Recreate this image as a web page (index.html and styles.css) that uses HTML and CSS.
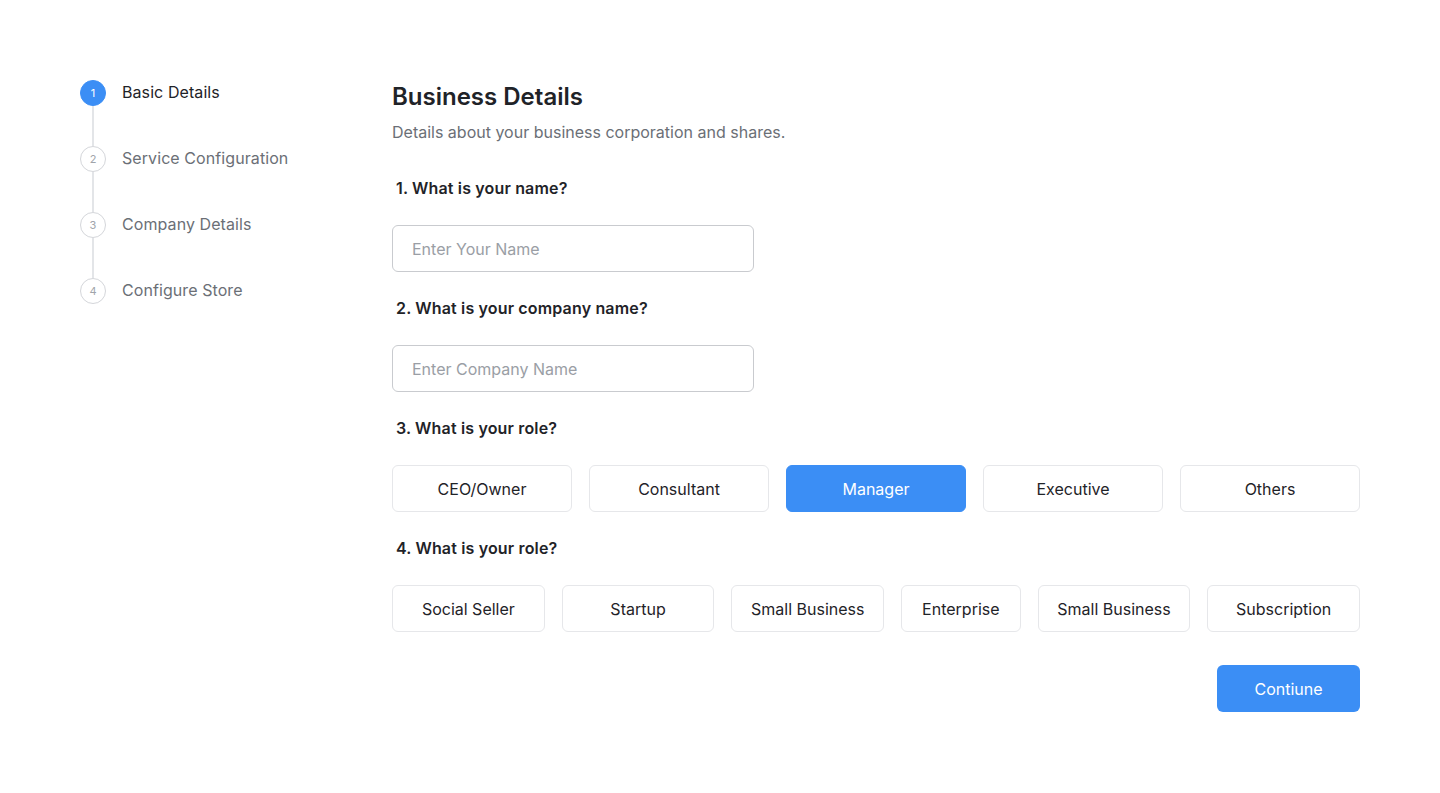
FILE: index.html
```html
<!DOCTYPE html>
<html lang="en">
<head>
<meta charset="utf-8">
<title>Business Details</title>
<link rel="stylesheet" href="styles.css">
</head>
<body>
<div class="page">
  <aside class="stepper">
    <div class="step active">
      <div class="step-marker"><span class="dot">1</span><span class="line"></span></div>
      <span class="step-label">Basic Details</span>
    </div>
    <div class="step">
      <div class="step-marker"><span class="dot">2</span><span class="line"></span></div>
      <span class="step-label">Service Configuration</span>
    </div>
    <div class="step">
      <div class="step-marker"><span class="dot">3</span><span class="line"></span></div>
      <span class="step-label">Company Details</span>
    </div>
    <div class="step last">
      <div class="step-marker"><span class="dot">4</span></div>
      <span class="step-label">Configure Store</span>
    </div>
  </aside>
  <main class="form">
    <h1 class="title">Business Details</h1>
    <p class="subtitle">Details about your business corporation and shares.</p>

    <label class="question">1. What is your name?</label>
    <div class="input">Enter Your Name</div>

    <label class="question">2. What is your company name?</label>
    <div class="input">Enter Company Name</div>

    <label class="question">3. What is your role?</label>
    <div class="options five">
      <div class="option">CEO/Owner</div>
      <div class="option">Consultant</div>
      <div class="option selected">Manager</div>
      <div class="option">Executive</div>
      <div class="option">Others</div>
    </div>

    <label class="question">4. What is your role?</label>
    <div class="options six">
      <div class="option">Social Seller</div>
      <div class="option">Startup</div>
      <div class="option">Small Business</div>
      <div class="option narrow">Enterprise</div>
      <div class="option">Small Business</div>
      <div class="option">Subscription</div>
    </div>

    <div class="actions">
      <button class="continue">Contiune</button>
    </div>
  </main>
</div>
</body>
</html>
```
FILE: styles.css
```css
* { box-sizing: border-box; }
html, body { margin: 0; padding: 0; background: #ffffff; }
body {
  font-family: Inter, "Noto Sans", "Liberation Sans", sans-serif;
  color: #1f2328;
  -webkit-font-smoothing: antialiased;
}
.page {
  display: flex;
  padding: 80px 80px 0 80px;
}
.stepper {
  width: 312px;
  flex: none;
  display: flex;
  flex-direction: column;
}
.step {
  display: flex;
  align-items: flex-start;
  height: 66px;
}
.step-marker {
  width: 26px;
  display: flex;
  flex-direction: column;
  align-items: center;
  height: 66px;
}
.dot {
  width: 26px;
  height: 26px;
  border-radius: 50%;
  border: 1px solid #d4d6da;
  color: #a0a4aa;
  font-size: 11px;
  display: flex;
  align-items: center;
  justify-content: center;
  flex: none;
  background: #fff;
}
.step.active .dot {
  background: #3b8ef5;
  border-color: #3b8ef5;
  color: #ffffff;
}
.line {
  width: 2px;
  flex: 1;
  background: #e3e5e8;
}
.step-label {
  margin-left: 16px;
  font-size: 16px;
  line-height: 26px;
  color: #6b6f76;
  margin-top: -1px;
  letter-spacing: 0.005em;
}
.step.active .step-label { color: #1f2328; }

.form {
  flex: 1;
  display: flex;
  flex-direction: column;
  max-width: 968px;
}
.title {
  margin: 1px 0 0 0;
  font-size: 24px;
  line-height: 32px;
  font-weight: 600;
  color: #1f2328;
}
.subtitle {
  margin: 7px 0 0 0;
  font-size: 16px;
  line-height: 24px;
  color: #6b6f76;
}
.question {
  display: block;
  margin: 32px 0 25px 4px;
  font-size: 16px;
  line-height: 24px;
  font-weight: 600;
  color: #1f2328;
  letter-spacing: 0.01em;
}
.input + .question, .options + .question { margin-top: 24px; }
.input {
  width: 362px;
  height: 47px;
  border: 1px solid #c9cbcf;
  border-radius: 6px;
  padding: 0 19px;
  display: flex;
  align-items: center;
  font-size: 16px;
  color: #9a9ea5;
}
.options {
  display: flex;
  gap: 17px;
}
.option {
  flex: 1 1 0;
  height: 47px;
  border: 1px solid #e6e7ea;
  border-radius: 6px;
  display: flex;
  align-items: center;
  justify-content: center;
  font-size: 16px;
  color: #1f2328;
  background: #fff;
}
.option.narrow { flex: 0.78 1 0; }
.option.selected {
  background: #3b8ef5;
  border-color: #3b8ef5;
  color: #ffffff;
}
.actions {
  display: flex;
  justify-content: flex-end;
  margin-top: 33px;
}
.continue {
  width: 143px;
  height: 47px;
  border: none;
  border-radius: 6px;
  background: #3b8ef5;
  color: #ffffff;
  font-family: inherit;
  font-size: 16px;
}
```
